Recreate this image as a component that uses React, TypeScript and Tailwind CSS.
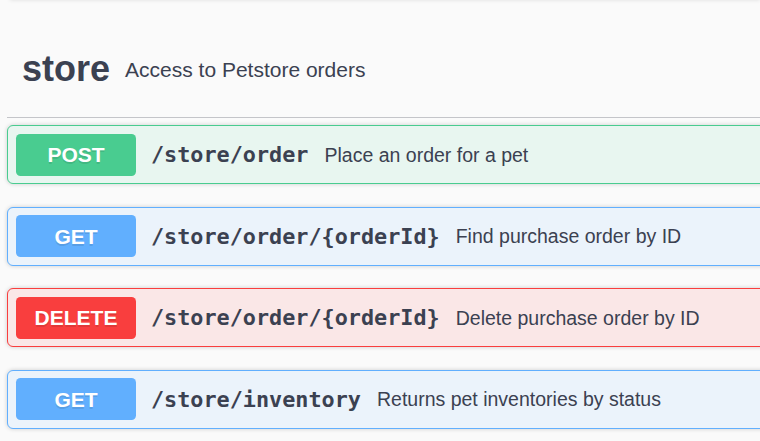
import React from "react";

type Op = {
  method: "POST" | "GET" | "DELETE";
  path: string;
  summary: string;
};

const ops: Op[] = [
  { method: "POST", path: "/store/order", summary: "Place an order for a pet" },
  { method: "GET", path: "/store/order/{orderId}", summary: "Find purchase order by ID" },
  { method: "DELETE", path: "/store/order/{orderId}", summary: "Delete purchase order by ID" },
  { method: "GET", path: "/store/inventory", summary: "Returns pet inventories by status" },
];

const styles = {
  POST: { block: "bg-[#e8f6f0] border-[#49cc90]", badge: "bg-[#49cc90]" },
  GET: { block: "bg-[#ebf3fb] border-[#61affe]", badge: "bg-[#61affe]" },
  DELETE: { block: "bg-[#fae7e7] border-[#f93e3e]", badge: "bg-[#f93e3e]" },
};

const OpBlock = ({ op }: { op: Op }) => {
  const s = styles[op.method];
  return (
    <div
      className={`flex items-center h-[59px] px-[8px] border rounded-[6px] shadow-[0_0_4px_rgba(0,0,0,0.19)] ${s.block}`}
    >
      {/* method badge */}
      <div
        className={`w-[120px] h-[42px] shrink-0 flex items-center justify-center rounded-[4.5px] text-white text-[21px] font-bold pt-[1px] [text-shadow:0_1.5px_0_rgba(0,0,0,0.1)] ${s.badge}`}
      >
        {op.method}
      </div>
      <span className="ml-[15px] pt-[2px] font-['DejaVu_Sans_Mono',monospace] font-bold text-[21.8px] text-[#3b4151] whitespace-nowrap">
        {op.path}
      </span>
      <span className="ml-[16px] pt-[2px] text-[19.5px] text-[#3b4151] whitespace-nowrap">
        {op.summary}
      </span>
    </div>
  );
};

export default function App() {
  return (
    <div className="w-[760px] h-[441px] overflow-hidden bg-[#fafafa] relative font-['Liberation_Sans',Arial,sans-serif]">
      {/* shadow of the block above */}
      <div className="absolute -top-[6px] left-[10px] right-0 h-[6px] bg-[#fafafa] shadow-[0_0_4px_rgba(0,0,0,0.12)]" />

      <div className="w-[790px] pl-[7px]">
        {/* tag header */}
        <div className="mt-[20px] h-[98px] flex items-center px-[15px] border-b-[1.5px] border-[#c4c5c9]">
          <h4 className="text-[36px] font-bold text-[#3b4151] leading-none">store</h4>
          <span className="ml-[15px] mt-[2px] text-[21px] text-[#3b4151]">
            Access to Petstore orders
          </span>
        </div>

        {/* operations */}
        <div className="mt-[7px] flex flex-col gap-[22.5px]">
          {ops.map((op, i) => (
            <OpBlock key={i} op={op} />
          ))}
        </div>
      </div>
    </div>
  );
}
